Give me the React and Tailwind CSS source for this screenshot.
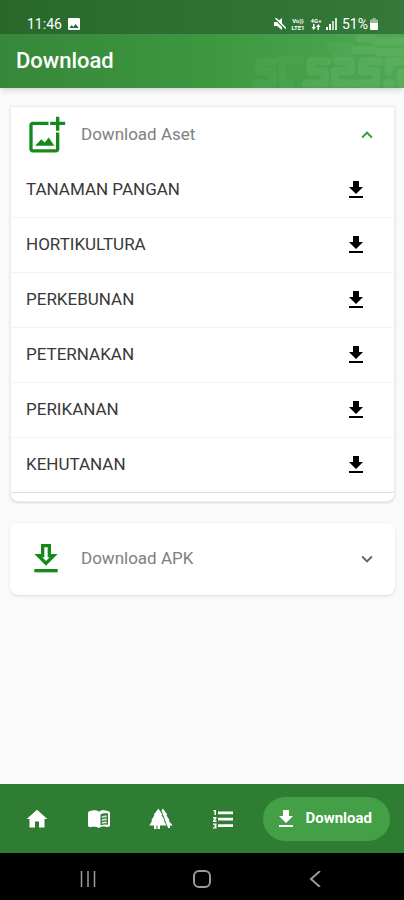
import { useState } from "react";
import {
    MdFileDownload,
    MdImage,
    MdKeyboardArrowDown,
    MdKeyboardArrowUp
} from "react-icons/md";

const assets = [
    "TANAMAN PANGAN",
    "HORTIKULTURA",
    "PERKEBUNAN",
    "PETERNAKAN",
    "PERIKANAN",
    "KEHUTANAN",
];

const HomeIcon = () => (
    <svg viewBox="0 0 24 24" className="size-6" fill="currentColor" aria-hidden="true">
        <path d="M10 20.500v-6h4v6h5.500V12H22.300L12 2.700 1.700 12h2.800v8.500z" />
    </svg>
);

const BookIcon = () => (
    <svg viewBox="0 0 24 24" className="size-6" fill="currentColor" aria-hidden="true">
        <path
            fillRule="evenodd"
            d="M3 4c3-1 7-1 9 .8C14 3 18 3 21 4q2 .3 2 2v12q0 2-2 2c-3-.8-7-.8-9 1-2-1.200-6-1.500-9-.8q-2 0-2-2V6q0-1.700 2-2zM13.500 7.500v11c2-1 5-1.200 7.500-.7V6.500c-2.500-.5-5.500-.2-7.500 1z"
        />
        <path d="M14.800 9.200q2.500-1 5-.6v1.800q-2.500-.4-5 .6zM14.800 12.200q2.500-1 5-.6v1.800q-2.500-.4-5 .6zM14.800 15.200q2.500-1 5-.6v1.800q-2.500-.4-5 .6z" opacity="0.8" />
    </svg>
);

const ForestIcon = () => (
    <svg viewBox="0 0 24 24" className="size-6" fill="currentColor" aria-hidden="true">
        <path d="M9.500 1.500l4 6.500h-1l3.300 5.500h-1.200l3 5H11V22H8.500v-3.500H7.500V22H5v-3.500H.3l3-5H2.200L5.500 8h-1z" />
        <path d="M12.500 3.500L14 1.500 18.500 8h-1.200l3.400 5.500h-1.200l4.200 5H21V21h-1.800l-2.700-6.500-1-3z" />
    </svg>
);

const ListIcon = () => (
    <svg viewBox="0 0 24 24" className="size-6" fill="currentColor" aria-hidden="true">
        <path d="M7 4.500H22V7.200H7zM7 10.800H22v2.700H7zM7 17.200H22v2.700H7z" />
        <path d="M2.500 3H5v5H3.500V4.500h-1zM2 10h3.500v1.300L4 13.500h1.500V15H2v-1.300L3.600 11.500H2zM2 16.500h3.500v5H2v-1.200h2v-.8H3v-1h1v-.8H2z" />
    </svg>
);

const navItems = [
    { name: "Beranda", icon: HomeIcon },
    { name: "Buku", icon: BookIcon },
    { name: "Kehutanan", icon: ForestIcon },
    { name: "Daftar", icon: ListIcon },
];

const AddPhotoIcon = () => (
    <svg viewBox="0 0 24 24" className="size-10 shrink-0" fill="currentColor" aria-hidden="true">
        <path d="M18 20.500H4V6h9.500V4H4c-1.100 0-2 .9-2 2v14.500c0 1.100.9 2 2 2h14c1.100 0 2-.9 2-2V10.500h-2v10z" />
        <path d="M20 4V1h-2v3h-3.500v2H18v3.500h2V6h3.500V4z" />
        <path d="M5.500 18.500h11.500l-3.400-5-2.400 3-2-2z" />
    </svg>
);

const DownloadOutlineIcon = () => (
    <svg viewBox="0 0 24 24" className="size-10 shrink-0" fill="currentColor" aria-hidden="true">
        <path fillRule="evenodd" d="M19 9h-4V3H9v6H5l7 7 7-7zm-8 2V5h2v6h1.200L12 13.200 9.800 11H11z" />
        <path d="M5 18h14v2H5z" />
    </svg>
);

const HeaderPattern = () => (
    <svg
        viewBox="0 0 462 162"
        className="absolute right-0 bottom-0 h-[54px] w-[154px]"
        fill="none"
        strokeWidth="25"
        strokeLinejoin="round"
        strokeLinecap="round"
        stroke="#7cc47f"
        aria-hidden="true"
    >
        <g opacity="0.1">
            <path d="M72 84H28v28h40v36H14M98 100v48h26" />
            <path d="M150 76H92M240 38h60M256 64h44" />
        </g>
        <g opacity="0.22">
            <path d="M232 82h-50v30h42v36h-56" />
            <path d="M262 82h40v30h-48v36h54" />
            <path d="M388 82h-52v30h42v36h-52" />
            <path d="M466 82h-50v30M412 148h10M454 116v32h20" />
            <path d="M330 14h36l14 8h80M316 48h56l14 6h80" />
        </g>
    </svg>
);

const StatusBar = () => (
    <div className="flex h-[34px] items-end justify-between bg-linear-to-r from-[#28692b] to-[#34793a] pr-[26px] pl-[27px] text-white">
        <div className="flex h-5 items-center gap-1 text-sm">
            <span>11:46</span>
            <MdImage size={16} />
        </div>
        <div className="flex h-5 items-center gap-1">
            <svg viewBox="0 0 12 12" className="size-3" fill="currentColor" aria-hidden="true">
                <path d="M0 4h3l5-4v12L3 8H0z" />
                <path d="M1 1l10 10" stroke="#2d7031" strokeWidth="1.500" />
                <path d="M1.500 0L12 10.500" stroke="currentColor" strokeWidth="1.500" />
            </svg>
            <div className="w-4 text-center text-[6px] leading-[7px] font-bold">
                <div>Vo))</div>
                <div>LTE1</div>
            </div>
            <div className="flex w-3 flex-col items-center text-[6px] leading-[7px] font-bold">
                <span>4G+</span>
                <svg viewBox="0 0 10 7" className="h-[7px] w-[10px]" fill="currentColor" aria-hidden="true">
                    <path d="M2 0h1.500v3H5L2.700 6 .5 3H2zM6.500 6V3H5l2.300-3 2.200 3H8v3z" />
                </svg>
            </div>
            <svg viewBox="0 0 12 12" className="size-3" fill="currentColor" aria-hidden="true">
                <path d="M0 9h2v3H0zM3 6h2v6H3z" />
                <path d="M6 3h2v9H6z" opacity="0.7" />
                <path d="M9 0h2v12H9z" opacity="0.8" />
            </svg>
            <div className="flex items-center gap-0.5 text-sm">
                <span>51%</span>
                <svg viewBox="0 0 8 12" className="h-3 w-2" fill="currentColor" aria-hidden="true">
                    <path d="M2.500 0h3v1.500H7q1 0 1 1V6H0V2.500q0-1 1-1h1.500z" opacity="0.5" />
                    <path d="M0 5h8v6q0 1-1 1H1q-1 0-1-1z" />
                </svg>
            </div>
        </div>
    </div>
);

const App = () => {
    const [asetOpen, setAsetOpen] = useState(true);
    const [apkOpen, setApkOpen] = useState(false);

    return (
        <div className="flex min-h-screen flex-col bg-[#fafafa] font-[Roboto,sans-serif]">
            <StatusBar />

            <header className="relative flex h-[54px] items-center overflow-hidden bg-linear-to-r from-[#37873a] via-[#3c973f] to-[#4fa953] px-4 shadow-md">
                <HeaderPattern />
                <h1 className="text-[22px] leading-7 font-medium text-white">Download</h1>
            </header>

            <main className="flex flex-1 flex-col gap-[21px] pt-[18px] pr-[9px] pl-[10px]">
                {/* Aset */}
                <section className="rounded-b-lg border border-[#ececec] bg-white pb-2 shadow">
                    <button
                        onClick={() => setAsetOpen(!asetOpen)}
                        className="flex h-14 w-full items-center pr-4 pl-[15px] text-left"
                    >
                        <span className="text-[#148a1c]"><AddPhotoIcon /></span>
                        <span className="ml-[15px] flex-1 text-[17px] text-[#808080]">Download Aset</span>
                        {asetOpen
                            ? <MdKeyboardArrowUp size={22} className="text-[#2f9e35]" />
                            : <MdKeyboardArrowDown size={22} className="text-[#666666]" />}
                    </button>
                    {asetOpen && (
                        <ul>
                            {assets.map((name) => (
                                <li key={name} className="flex h-[55px] items-center justify-between border-b border-[#f3f3f3] pr-[26px] pl-[15px] last:border-[#dedede]">
                                    <span className="text-[17px] text-[#383838]">{name}</span>
                                    <button aria-label={name}>
                                        <MdFileDownload size={24} />
                                    </button>
                                </li>
                            ))}
                        </ul>
                    )}
                </section>

                {/* APK */}
                <section className="rounded-lg bg-white shadow">
                    <button
                        onClick={() => setApkOpen(!apkOpen)}
                        className="flex h-[72px] w-full items-center pr-[17px] pl-4 text-left"
                    >
                        <span className="text-[#148a1c]"><DownloadOutlineIcon /></span>
                        <span className="ml-[15px] flex-1 text-[17px] text-[#808080]">Download APK</span>
                        {apkOpen
                            ? <MdKeyboardArrowUp size={22} className="text-[#2f9e35]" />
                            : <MdKeyboardArrowDown size={22} className="text-[#666666]" />}
                    </button>
                </section>
            </main>

            <nav className="flex h-[69px] items-center justify-between bg-[#2e7d32] pr-[14px] pl-[25px] text-white">
                <div className="flex flex-1 items-center justify-between pr-7">
                    {navItems.map((item) => {
                        const Icon = item.icon;

                        return (
                            <a key={item.name} href="#" aria-label={item.name}>
                                <Icon />
                            </a>
                        );
                    })}
                </div>
                <a href="#" className="flex h-11 items-center gap-[7px] rounded-full bg-[#43a047] pr-[18px] pl-[11px]">
                    <MdFileDownload size={24} />
                    <span className="text-[15px] font-bold">Download</span>
                </a>
            </nav>

            {/* Android buttons */}
            <div className="flex h-[47px] items-center justify-between bg-black px-20 pt-1 text-[#9a9a9a]">
                <button aria-label="Recents">
                    <svg viewBox="0 0 16 16" className="size-4" fill="none" stroke="currentColor" strokeWidth="1.500">
                        <path d="M1.500 0v16M8 0v16M14.500 0v16" />
                    </svg>
                </button>
                <button aria-label="Home">
                    <svg viewBox="0 0 18 18" className="size-[18px]" fill="none" stroke="currentColor" strokeWidth="2">
                        <rect x="1" y="1" width="16" height="16" rx="5" />
                    </svg>
                </button>
                <button aria-label="Back">
                    <svg viewBox="0 0 16 16" className="size-4" fill="none" stroke="currentColor" strokeWidth="2">
                        <path d="M12 0L3 8l9 8" />
                    </svg>
                </button>
            </div>
        </div>
    );
};

export default App;
